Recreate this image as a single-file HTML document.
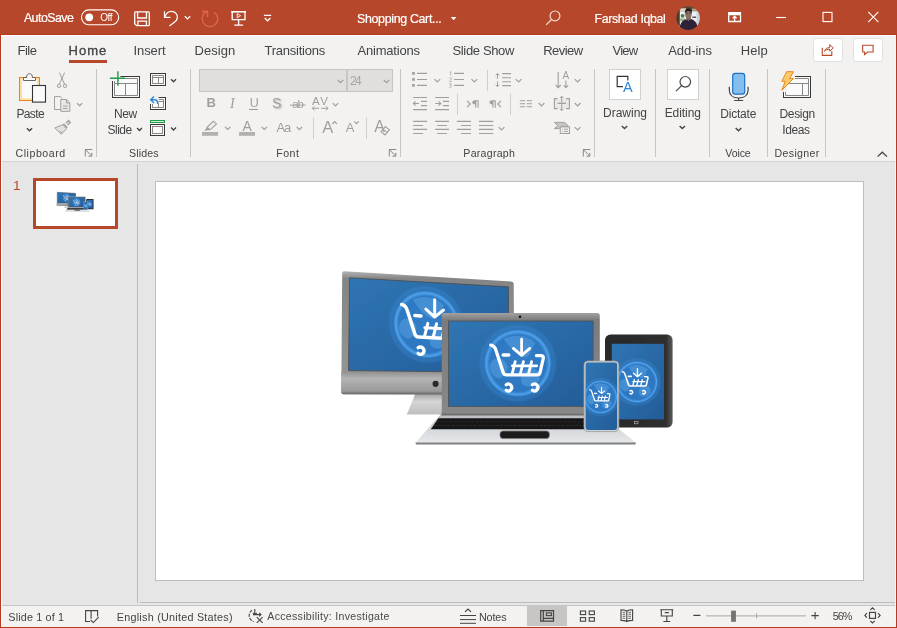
<!DOCTYPE html>
<html lang="en">
<head>
<meta charset="utf-8">
<title>Shopping Cart - PowerPoint</title>
<style>
*{box-sizing:border-box;margin:0;padding:0}
html,body{width:897px;height:628px;overflow:hidden;background:#e6e6e6}
body{position:relative;font-family:"Liberation Sans",sans-serif;color:#444;-webkit-font-smoothing:antialiased}
.abs{position:absolute}
.t{position:absolute;white-space:nowrap;line-height:20px;height:20px}
svg{position:absolute;overflow:visible}
#titlebar{left:0;top:0;width:897px;height:35px;background:#b7472a}
#ribbon{left:0;top:35px;width:897px;height:126px;background:#f3f2f1}
#ribline{left:0;top:161px;width:897px;height:1px;background:#d4d3d2}
#status{left:0;top:606px;width:897px;height:22px;background:#f3f2f1}
#statline{left:0;top:605px;width:897px;height:1px;background:#c6c5c4}
#paneh{left:140px;top:602px;width:757px;height:1px;background:#bcbcbc}
#panev{left:137px;top:164px;width:1px;height:439px;background:#bcbcbc}
#bl{left:0;top:34px;width:1px;height:594px;background:#b43b1d}
#br{left:896px;top:34px;width:1px;height:594px;background:#b43b1d}
#bb{left:0;top:627px;width:897px;height:1px;background:#b43b1d}
#fl{left:1px;top:35px;width:1px;height:592px;background:rgba(252,255,255,.85)}
#fr{left:895px;top:35px;width:1px;height:592px;background:rgba(250,246,244,.9)}
#fb{left:1px;top:626px;width:895px;height:1px;background:rgba(249,238,234,.95)}
#ft{left:1px;top:35px;width:895px;height:1px;background:rgba(252,255,255,.9)}
#tl{left:0;top:34px;width:897px;height:1px;background:#b43b1d}
.sep{position:absolute;width:1px;background:#c8c6c4;top:69px;height:88px}
.ssep{position:absolute;width:1px;background:#d0cecc}
.g{stroke:#a19f9d;fill:none;stroke-width:1}
.d{stroke:#444;fill:none;stroke-width:1}
.w{stroke:#fff;fill:none;stroke-width:1.3}
</style>
</head>
<body>
<div class="abs" id="titlebar"></div>
<div class="abs" id="ribbon"></div>
<div class="abs" id="ribline"></div>
<!-- title bar icons -->
<svg width="897" height="35" style="left:0;top:0" viewBox="0 0 897 35">
 <!-- autosave toggle -->
 <rect x="81.5" y="9.9" width="37.2" height="14.8" rx="7.4" class="w" style="stroke-width:1.1"/>
 <circle cx="89.2" cy="17.3" r="3.9" fill="#fff"/>
 <!-- save -->
 <path class="w" d="M135.6 11.9 H148.4 Q149.3 11.9 149.3 12.8 V24.7 Q149.3 25.6 148.4 25.6 H136.6 L134.7 23.7 V12.8 Q134.7 11.9 135.6 11.9 Z"/>
 <path class="w" d="M137.6 12 V18 H146.5 V12 M137.9 25.5 V21.2 H146.4 V25.5"/>
 <!-- undo -->
 <path class="w" d="M164.5 11.3 V17.3 H170.4" style="stroke-width:1.2"/>
 <path class="w" d="M164.8 17 C166 13.5 168.6 11.4 171.6 11.4 C175 11.4 177.4 14 177.4 17.2 C177.4 19.6 176 21.2 174 22.6 L169.4 26" style="stroke-width:1.2"/>
 <path class="w" d="M184.8 16.2 L187.5 18.9 L190.2 16.2" style="stroke-width:1.3"/>
 <!-- redo (disabled) -->
 <g stroke="#e0664e" fill="none" stroke-width="1.3">
  <path d="M214.2 12.2 A7.8 7.8 0 1 1 207.5 11.3"/>
  <path d="M202 11.5 H207.6 V16.9"/>
 </g>
 <!-- slideshow from beginning -->
 <path class="w" d="M231.2 11.8 H246" style="stroke-width:1.6"/>
 <path class="w" d="M232.2 12 V19.7 H245 V12 M238.6 19.8 V25 M234.2 25.1 H243.1"/>
 <path class="w" d="M237.2 13.6 L240.6 15.7 L237.2 17.8 Z" style="stroke-width:0.9"/>
 <!-- customize qat -->
 <path class="w" d="M263.9 15.4 H271.2 M264.7 18 L267.55 20.8 L270.4 18" style="stroke-width:1.3"/>
 <!-- title dropdown -->
 <path d="M450.8 17 H456.4 L453.6 20.2 Z" fill="#fff"/>
 <!-- search -->
 <g stroke="#f6ddd6" fill="none" stroke-width="1.2">
  <circle cx="555" cy="15.9" r="4.9"/>
  <path d="M551.5 19.5 L546.2 24.8"/>
 </g>
 <!-- avatar -->
 <defs><clipPath id="av"><circle cx="688.1" cy="18.1" r="11.8"/></clipPath>
 <filter id="avb" x="-10%" y="-10%" width="120%" height="120%"><feGaussianBlur stdDeviation=".55"/></filter></defs>
 <g clip-path="url(#av)"><g filter="url(#avb)">
  <rect x="675" y="5" width="27" height="27" fill="#eef1f4"/>
  <rect x="675" y="5" width="27" height="6.2" fill="#5c4a34"/>
  <rect x="678.6" y="8.2" width="7.4" height="2.8" fill="#d9cfbb"/>
  <rect x="692" y="8.6" width="5" height="2.2" fill="#b8ab94"/>
  <rect x="675" y="10" width="4.8" height="16" fill="#4b3c2c"/>
  <rect x="696.6" y="12" width="4" height="12" fill="#c9d3dc"/>
  <circle cx="682.6" cy="15.8" r="1.9" fill="#4e7a3a"/>
  <rect x="680" y="18.4" width="5" height="3" fill="#9fb48e"/>
  <rect x="692.4" y="16.6" width="3.6" height="1.2" fill="#33302f"/>
  <path d="M679.4 31 C679.6 23.5 682 20.4 686.2 19.2 L688.4 20.4 L691 19 C695.4 20.4 697.8 23.4 698.2 31 Z" fill="#2f2138"/>
  <path d="M686.2 16.5 H690.8 V19.6 L688.5 20.6 L686.2 19.6 Z" fill="#7a5e54"/>
  <ellipse cx="688.4" cy="14.2" rx="3.3" ry="4.2" fill="#8b6f65"/>
  <path d="M684.8 13.4 Q684.6 8.5 688.4 8.5 Q692.2 8.5 692 13.4 Q690.6 10.9 688.4 11 Q686.2 10.9 684.8 13.4Z" fill="#1e1a1e"/>
  <path d="M686 13.2 H687.6 M689.2 13.2 H690.8" stroke="#3a2c2c" stroke-width=".8"/>
 </g></g>
 <!-- ribbon display options -->
 <path class="w" d="M728.7 12.6 H740.5 V21.5 H728.7 Z M728.7 14.6 H740.5 M734.6 21.3 V16.3 M732.6 18.3 L734.6 16.3 L736.6 18.3"/>
 <path class="w" d="M728.2 13.2 H741" style="stroke-width:1.6"/>
 <!-- window controls -->
 <path class="w" d="M776.2 17.5 H786" style="stroke-width:1.1"/>
 <rect x="823" y="12.4" width="9" height="9.2" class="w" style="stroke-width:1.1"/>
 <path class="w" d="M868.2 11.8 L878.4 22.2 M878.4 11.8 L868.2 22.2" style="stroke-width:1.1"/>
</svg>
<!-- tab row -->
<div class="abs" style="left:69px;top:60px;width:38px;height:3px;background:#b7472a"></div>
<div class="abs" style="left:813px;top:38px;width:30px;height:24px;background:#fff;border:1px solid #e3e1df;border-radius:3px"></div>
<div class="abs" style="left:853px;top:38px;width:30px;height:24px;background:#fff;border:1px solid #e3e1df;border-radius:3px"></div>
<svg width="80" height="30" style="left:810px;top:36px" viewBox="810 36 80 30">
 <g stroke="#b7472a" fill="none" stroke-width="1.1">
  <path d="M822.3 47.8 V55.4 H831.8 V51.2"/>
  <path d="M824.6 51.2 C825.2 48.6 827 47.7 829.7 47.7 V44.6 L833.3 47.9 L829.7 51.2 V49.3 C827.6 49.2 826 49.6 824.6 51.2 Z" stroke-width="1"/>
  <path d="M862.7 45.2 H873.1 V52 H867.6 L864.6 54.6 V52 H862.7 Z"/>
 </g>
</svg>
<!-- ribbon -->
<div class="sep" style="left:96px"></div>
<div class="sep" style="left:190px"></div>
<div class="sep" style="left:400px"></div>
<div class="sep" style="left:594px"></div>
<div class="sep" style="left:655px"></div>
<div class="sep" style="left:709px"></div>
<div class="sep" style="left:767px"></div>
<div class="sep" style="left:825px"></div>
<div class="ssep" style="left:313px;top:118px;height:21px"></div>
<div class="ssep" style="left:366px;top:118px;height:21px"></div>
<div class="ssep" style="left:487px;top:70px;height:21px"></div>
<div class="ssep" style="left:457px;top:94px;height:21px"></div>
<div class="ssep" style="left:510px;top:94px;height:21px"></div>
<!-- font boxes -->
<div class="abs" style="left:199px;top:69px;width:148px;height:23px;background:#e1dfdd;border:1px solid #c8c6c4"></div>
<div class="abs" style="left:347px;top:69px;width:46px;height:23px;background:#e1dfdd;border:1px solid #c8c6c4"></div>
<!-- big white buttons -->
<div class="abs" style="left:609px;top:69px;width:32px;height:31px;background:#fff;border:1px solid #d2d0ce"></div>
<div class="abs" style="left:667px;top:69px;width:32px;height:31px;background:#fff;border:1px solid #d2d0ce"></div>
<svg width="897" height="100" style="left:0;top:62px" viewBox="0 62 897 100">
<!-- ===== clipboard group ===== -->
<g id="paste">
 <rect x="19.5" y="77.5" width="20" height="23" fill="#fcdf9e" stroke="#e8861b" stroke-width="1"/>
 <rect x="22" y="79.6" width="15" height="18.8" fill="#fafafa"/>
 <path d="M23.5 80.5 V77.5 H26.7 C26.3 75.4 27.6 73.7 29.5 73.7 C31.4 73.7 32.7 75.4 32.3 77.5 H35.5 V80.5 Z" fill="#fafafa" stroke="#666" stroke-width="1"/>
 <rect x="32.5" y="85.5" width="13" height="16.6" fill="#fafafa" stroke="#333" stroke-width="1.1"/>
 <path class="d" d="M26.9 128.3 L29.5 130.8 L32.1 128.3" style="stroke-width:1.4"/>
</g>
<g id="cut" class="g">
 <path d="M59.4 72.6 L64.6 84.2 M64.6 72.6 L59.4 84.2"/>
 <circle cx="59" cy="85.8" r="1.7"/><circle cx="65" cy="85.8" r="1.7"/>
</g>
<g id="copy" class="g">
 <path d="M60.7 109.5 H54.5 V96.6 H60.2 L62 98.4" />
 <path d="M60.8 99.5 H66.6 L69.8 102.7 V111.3 H60.8 Z" fill="#ebe9e7"/>
 <path d="M66.4 99.6 V103 H69.7 M63 106 H67.6 M63 108.4 H67.6"/>
 <path d="M77 103.2 L79.6 105.7 L82.2 103.2" stroke-width="1.2"/>
</g>
<g id="painter" class="g">
 <path d="M66 123.2 L68.4 120.6 L70.2 122.2 L67.6 125" stroke-width="1.4"/>
 <path d="M62.6 124.6 L66.4 128.8 L61.4 134.2 L54.8 128 Z" fill="#e4e2e0"/>
 <path d="M57.4 130.4 L63.6 131.8 L61.4 134.2 Z" fill="#bdbbb9" stroke="none"/>
 <path d="M63.4 123.8 L67.2 127.8" stroke-width="1.6"/>
</g>
<path class="g" d="M85 149.5 H92.3 M85.3 149.5 V156.5 M86 150.3 L91.8 156 M91.8 152.8 V156.2 H88.4" style="stroke:#8a8886"/>
<!-- ===== slides group ===== -->
<g id="newslide">
 <rect x="112.5" y="76.5" width="27" height="21" fill="#fafafa" stroke="#3b3a39" stroke-width="1"/>
 <path d="M114.5 78.5 H137.5 V95.5 H114.5 Z M114.5 83.5 H137.5 M125.5 83.5 V95.5" fill="none" stroke="#8a8886" stroke-width="1"/>
 <rect x="109" y="70" width="11.4" height="11" fill="#f3f2f1"/>
 <path d="M109.9 78.2 H125 M117.9 71.3 V85.8" stroke="#1e9e4a" stroke-width="1.4" fill="none"/>
 <path class="d" d="M137.1 128 L139.5 130.5 L141.9 128" style="stroke-width:1.4"/>
</g>
<g id="layout">
 <rect x="150.5" y="73.5" width="15" height="12" fill="#fafafa" stroke="#3b3a39" stroke-width="1"/>
 <path d="M152.5 75.5 H163.5 V83.5 H152.5 Z M152.5 77.5 H163.5 M158.5 77.5 V83.5" fill="none" stroke="#8a8886" stroke-width="1"/>
 <path class="d" d="M171 79.3 L173.5 81.8 L176 79.3" style="stroke-width:1.4"/>
</g>
<g id="reset">
 <rect x="150.5" y="97.5" width="15" height="12" fill="#fafafa" stroke="#3b3a39" stroke-width="1"/>
 <path d="M152.5 99.5 H163.5 V107.5 H152.5 Z M152.5 101.5 H163.5 M158.5 101.5 V107.5" fill="none" stroke="#8a8886" stroke-width="1"/>
 <rect x="149" y="95" width="9.6" height="9" fill="#f3f2f1"/>
 <path d="M154 96.5 L150.7 99.7 L154 102.9 M150.9 99.7 H154.6 C156.6 99.7 157.7 101.2 157.7 104" fill="none" stroke="#2b88d8" stroke-width="1.4"/>
</g>
<g id="section">
 <rect x="150.5" y="120.5" width="14" height="2" fill="#c7ebd3" stroke="#1e9e4a" stroke-width="1"/>
 <rect x="150.5" y="124.5" width="14" height="11" fill="#fafafa" stroke="#3b3a39" stroke-width="1"/>
 <rect x="152.5" y="126.5" width="10" height="7" fill="none" stroke="#8a8886" stroke-width="1"/>
 <path class="d" d="M171 127.4 L173.5 129.9 L176 127.4" style="stroke-width:1.4"/>
</g>
<!-- ===== font group ===== -->
<g class="g" style="stroke-width:1.2">
 <path d="M337.8 80 L340.5 82.7 L343.2 80"/>
 <path d="M383.8 80 L386.5 82.7 L389.2 80"/>
 <path d="M332.8 103.1 L335.5 105.8 L338.2 103.1"/>
 <path d="M225 126.8 L227.7 129.5 L230.4 126.8"/>
 <path d="M261.6 126.8 L264.3 129.5 L267 126.8"/>
 <path d="M296.7 127 L299.4 129.7 L302.1 127"/>
 <path d="M332.3 124 L334.6 121.7 L336.9 124"/>
 <path d="M354.2 121.4 L356.5 123.7 L358.8 121.4"/>
</g>
<path class="g" d="M249 109.5 H258" style="stroke-width:1.1"/>
<path class="g" d="M290 105.1 H305.6" style="stroke-width:1"/>
<path class="g" d="M312.3 108.3 H319 M314.4 106.2 L312.3 108.3 L314.4 110.4 M321.2 108.3 H328 M325.9 106.2 L328 108.3 L325.9 110.4"/>
<g id="hilite">
 <rect x="202" y="132" width="16.1" height="3.8" fill="#b3b0ad"/>
 <path d="M213.2 121.2 L216.4 123.6 L210.4 130 L207.2 127.6 Z" class="g" transform="rotate(4 212 125)" style="stroke-width:1.1"/>
 <path d="M207.2 127.4 L210.2 130 L204 130.8 Z" fill="#a19f9d"/>
</g>
<rect x="239.1" y="132" width="15.9" height="3.8" fill="#b3b0ad"/>
<g id="clearfmt" class="g">
 <path d="M385.4 126.6 L389.4 129.8 L385 134.9 L381 131.7 Z" fill="#f3f2f1" stroke-width="1.1"/>
 <path d="M383 129.2 L387.2 132.5" stroke-width="1"/>
</g>
<path class="g" d="M389 149.5 H396.3 M389.3 149.5 V156.5 M390 150.3 L395.8 156 M395.8 152.8 V156.2 H392.4" style="stroke:#8a8886"/>
<!-- ===== paragraph group ===== -->
<g class="g" style="stroke-width:1.1">
 <path d="M417 73.4 H427 M417 79.5 H427 M417 85.4 H427"/>
 <path d="M454.1 73.4 H464 M454.1 79.5 H464 M454.1 85.4 H464"/>
 <path d="M502.1 73.6 H511 M502.1 77.7 H511 M502.1 81.7 H511 M502.1 85.6 H511"/>
 <path d="M497.5 73.6 V78.9 M495.6 75.5 L497.5 73.6 L499.4 75.5 M497.5 81.3 V86.6 M495.6 84.7 L497.5 86.6 L499.4 84.7" stroke-width="1"/>
 <!-- indent -->
 <path d="M413.1 97.5 H427 M413.1 109.6 H427 M421 101.4 H427 M421 105.6 H427 M413.4 103.5 H419 M415.5 101.4 L413.4 103.5 L415.5 105.6"/>
 <path d="M435.1 97.5 H449 M435.1 109.6 H449 M443 101.4 H449 M443 105.6 H449 M435.1 103.5 H440.8 M438.7 101.4 L440.8 103.5 L438.7 105.6"/>
 <!-- align -->
 <path d="M413.1 121.4 H427 M413.1 125.5 H423.1 M413.1 129.4 H427 M413.1 133.5 H423.1"/>
 <path d="M435.1 121.4 H449 M437.2 125.5 H447 M435.1 129.4 H449 M437.2 133.5 H447"/>
 <path d="M456.9 121.4 H471 M461.1 125.5 H471 M456.9 129.4 H471 M461.1 133.5 H471"/>
 <path d="M479 121.4 H493.2 M479 125.5 H493.2 M479 129.4 H493.2 M479 133.5 H493.2"/>
 <!-- columns -->
 <path d="M519.8 100.7 H525.1 M519.8 103.8 H525.1 M519.8 106.7 H525.1 M526.7 100.7 H532.1 M526.7 103.8 H532.1 M526.7 106.7 H532.1"/>
</g>
<g fill="#a19f9d">
 <rect x="412.1" y="72" width="2.7" height="2.7"/><rect x="412.1" y="78.1" width="2.7" height="2.7"/><rect x="412.1" y="84" width="2.7" height="2.7"/>
</g>
<g class="g" style="stroke-width:0.7">
 <path d="M449.6 72.6 L450.7 71.6 V75.4"/>
 <path d="M449.3 78.4 C449.6 77.4 451.6 77.4 451.5 78.7 C451.4 79.6 450 80.3 449.3 81.4 H451.8"/>
 <path d="M449.3 83.8 H451.4 L450.3 85.3 C451.8 85.3 451.9 87.4 450.3 87.4 C449.7 87.4 449.4 87.2 449.2 86.9"/>
</g>
<g class="g" style="stroke-width:1.2">
 <path d="M434.4 79.1 L437.3 82 L440.2 79.1"/>
 <path d="M471.5 79.1 L474.4 82 L477.3 79.1"/>
 <path d="M515.7 79.1 L518.6 82 L521.5 79.1"/>
 <path d="M574.7 79.1 L577.6 82 L580.5 79.1"/>
 <path d="M538.6 103 L541.5 105.9 L544.4 103"/>
 <path d="M574.7 103 L577.6 105.9 L580.5 103"/>
 <path d="M498.6 127.1 L501.5 130 L504.4 127.1"/>
 <path d="M574.7 127.1 L577.6 130 L580.5 127.1"/>
 <!-- > and < for paragraph direction -->
 <path d="M467 101 L470.4 104 L467 107" stroke-width="1.1"/>
 <path d="M501 101 L497.6 104 L501 107" stroke-width="1.1"/>
</g>
<!-- pilcrows -->
<g fill="#a19f9d">
 <path d="M478.6 100.3 V107.8 H477.5 V101.3 H476.3 V107.8 H475.2 V104.4 C473.4 104.4 472.3 103.6 472.3 102.3 C472.3 101 473.4 100.3 475.2 100.3 Z"/>
 <path d="M495.8 100.3 V107.8 H494.7 V101.3 H493.5 V107.8 H492.4 V104.4 C490.6 104.4 489.5 103.6 489.5 102.3 C489.5 101 490.6 100.3 492.4 100.3 Z"/>
</g>
<!-- text direction -->
<g class="g" style="stroke-width:1.1">
 <path d="M558.2 72 V87.6 M555.6 85 L558.2 87.6 L560.8 85"/>
 <path d="M565.9 80.6 V87.6 M563.7 85.4 L565.9 87.6 L568.1 85.4"/>
</g>
<!-- align text -->
<g class="g" style="stroke-width:1.1">
 <rect x="555" y="99" width="14" height="9.2" fill="#ebe9e7" stroke="none"/>
 <path d="M557.6 98.6 H554.4 V108.6 H557.6 M566 98.6 H569.4 V108.6 H566 M557.6 103.4 H566"/>
 <path d="M561.7 102.6 V96.2 M559.9 98 L561.7 96.2 L563.5 98 M561.7 104.2 V110.6 M559.9 108.8 L561.7 110.6 L563.5 108.8" stroke-width="1"/>
</g>
<!-- smartart -->
<g class="g" style="stroke-width:1">
 <path d="M554.3 122.4 H564.8 L568.4 126.2 H562 L559 128.6 L554.3 128.6 L558 125.5 Z" fill="#c8c6c4"/>
 <rect x="560.3" y="126.9" width="9.2" height="6.6" fill="#f3f2f1"/>
 <path d="M562 129.2 H562.9 M564 129.2 H568 M562 131.4 H562.9 M564 131.4 H568"/>
</g>
<path class="g" d="M583 149.5 H590.3 M583.3 149.5 V156.5 M584 150.3 L589.8 156 M589.8 152.8 V156.2 H586.4" style="stroke:#8a8886"/>
<!-- ===== drawing ===== -->
<path d="M623 86.6 H617.2 V76.4 H627.8 V80.6" class="d" style="stroke:#333;stroke-width:1.2"/>
<path class="d" d="M621.8 126 L624.5 128.6 L627.2 126" style="stroke-width:1.4"/>
<!-- ===== editing ===== -->
<g class="d" style="stroke-width:1.2">
 <circle cx="685.3" cy="81.8" r="5.3"/>
 <path d="M681.4 85.8 L676 91.2"/>
</g>
<path class="d" d="M679.6 126 L682.3 128.6 L685 126" style="stroke-width:1.4"/>
<!-- ===== dictate ===== -->
<rect x="732.7" y="73.3" width="12" height="20.9" rx="2.6" fill="#83beec" stroke="#1a73c7" stroke-width="1.2"/>
<path class="d" d="M729.3 86.8 V90 C729.3 95 733 98 738.7 98 C744.4 98 748.1 95 748.1 90 V86.8 M738.7 98 V100.4 M734.2 100.5 H743.2" style="stroke-width:1.2"/>
<path class="d" d="M735.7 128 L738.5 130.7 L741.3 128" style="stroke-width:1.4"/>
<!-- ===== design ideas ===== -->
<rect x="783.5" y="76.5" width="27" height="21" fill="#fafafa" stroke="#3b3a39" stroke-width="1"/>
<path d="M785.5 78.5 H808.5 V95.5 H785.5 Z M785.5 83.5 H808.5 M802.5 83.5 V95.5" fill="none" stroke="#8a8886" stroke-width="1"/>
<path d="M780 70 H795 V80 H787 V92 H780 Z" fill="#f3f2f1"/>
<path d="M786.6 71.7 H793.4 L789.6 78.6 H793.4 L781.8 90.2 L785.3 81.3 H781.8 Z" fill="#fbcb6b" stroke="#e8861b" stroke-width="1" stroke-linejoin="round"/>
<!-- collapse -->
<path class="d" d="M877.6 156.6 L882.3 152.2 L887 156.6" style="stroke-width:1.3"/>
</svg>
<!-- workspace -->
<div class="abs" id="panev"></div>
<div class="abs" id="paneh"></div>
<div class="abs" id="thumb" style="left:33px;top:178px;width:85px;height:51px;background:#fff;border:3px solid #b7472a"></div>
<div class="abs" id="slide" style="left:155px;top:181px;width:709px;height:400px;background:#fff;border:1px solid #bdbdbd"></div>
<svg width="897" height="628" style="left:0;top:0" viewBox="0 0 897 628">
<defs>
 <linearGradient id="scr" x1="0" y1="0" x2="1" y2="1">
  <stop offset="0" stop-color="#2f75b3"/><stop offset="1" stop-color="#235d98"/>
 </linearGradient>
 <radialGradient id="glow">
  <stop offset="0" stop-color="#3684d2" stop-opacity=".75"/>
  <stop offset=".7" stop-color="#2e7bc8" stop-opacity=".8"/>
  <stop offset=".79" stop-color="#52a6f2" stop-opacity=".95"/>
  <stop offset=".85" stop-color="#2f7cc6" stop-opacity=".5"/>
  <stop offset=".93" stop-color="#3d8fde" stop-opacity=".3"/>
  <stop offset="1" stop-color="#2d74b6" stop-opacity="0"/>
 </radialGradient>
 <linearGradient id="bez" x1="0" y1="0" x2="0" y2="1">
  <stop offset="0" stop-color="#b4b4b4"/><stop offset=".06" stop-color="#858585"/><stop offset="1" stop-color="#979797"/>
 </linearGradient>
 <linearGradient id="chin" x1="0" y1="0" x2="0" y2="1">
  <stop offset="0" stop-color="#8f8f8f"/><stop offset=".3" stop-color="#b4b4b4"/><stop offset=".85" stop-color="#9a9a9a"/><stop offset="1" stop-color="#5e5e5e"/>
 </linearGradient>
 <linearGradient id="stand" x1="0" y1="0" x2="0" y2="1">
  <stop offset="0" stop-color="#9c9c9c"/><stop offset=".4" stop-color="#d6d6d6"/><stop offset="1" stop-color="#bdbdbd"/>
 </linearGradient>
 <linearGradient id="lid" x1="0" y1="0" x2="0" y2="1">
  <stop offset="0" stop-color="#a2a2a2"/><stop offset=".07" stop-color="#7b7b7b"/><stop offset="1" stop-color="#888888"/>
 </linearGradient>
 <linearGradient id="base" x1="0" y1="0" x2="0" y2="1">
  <stop offset="0" stop-color="#b9bcc0"/><stop offset=".5" stop-color="#d4d7db"/><stop offset="1" stop-color="#e6e8ea"/>
 </linearGradient>
 <linearGradient id="tab" x1="0" y1="0" x2="1" y2="0">
  <stop offset="0" stop-color="#2a2a2a"/><stop offset=".9" stop-color="#2e2e2e"/><stop offset="1" stop-color="#5a5a5a"/>
 </linearGradient>
 <g id="cart" fill="none" stroke="#fff" stroke-width="3.3" stroke-linecap="round" stroke-linejoin="round">
  <path d="M-27 -18 C-23.6 -17.6 -22.6 -15.6 -21.7 -12.4 L-14.6 9.2 Q-13.8 11.6 -11.2 11.6 H19 Q22 11.6 22.4 8.8 L25.4 -4.6 Q26 -7.6 23 -7.6 H18.6"/>
  <path d="M-14.7 -8.2 H-9"/>
  <path d="M-5.4 2.6 H19" stroke-width="2.8"/>
  <path d="M-2.6 -1.6 L-5.6 10.4 M5.6 -1.6 L2.6 10.4 M13.8 -1.6 L10.8 10.4" stroke-width="2.8"/>
  <path d="M3.8 -24 V-8.2 M-4.4 -14.8 L3.8 -7.8 L12 -14.8" stroke-width="2.8"/>
  <path d="M-11.6 21.6 A3.4 3.4 0 1 1 -11.6 27 M14.6 21.6 A3.4 3.4 0 1 1 14.6 27" stroke-width="3.2"/>
 </g>
 <g id="globe">
  <circle r="40" fill="url(#glow)"/>
  <path d="M-14 -24 C-4 -30 10 -28 18 -20 C12 -14 14 -6 6 -6 C-2 -8 -8 -16 -14 -24 Z M-26 -2 C-20 -8 -12 -4 -10 4 C-12 12 -18 18 -22 14 C-28 10 -30 4 -26 -2 Z M8 6 C16 2 24 8 22 16 C18 24 8 26 4 20 C2 14 4 10 8 6 Z" fill="#7cc0fa" opacity=".3"/>
 </g>
 <clipPath id="cm"><path d="M349.6 277.8 L508.4 286.8 L508.6 372.4 L348.5 370.6 Z"/></clipPath>
 <clipPath id="cl"><rect x="448.5" y="321" width="144.6" height="85.4"/></clipPath>
 <clipPath id="ct"><rect x="611.8" y="343.8" width="52.2" height="75.6"/></clipPath>
 <clipPath id="cp"><rect x="585.6" y="362.6" width="31.6" height="67.4" rx="2.4"/></clipPath>
 <filter id="soft" x="-2%" y="-2%" width="104%" height="104%"><feGaussianBlur stdDeviation=".45"/></filter>
 <g id="dev">
  <!-- monitor -->
  <path d="M406.8 414.4 L415.6 393 H444 V414.4 Z" fill="url(#stand)"/>
  <path d="M344.3 271.2 L511.4 281.5 Q513.6 281.7 513.7 283.8 L514.4 394.6 L343.4 394.2 Q341.3 394.2 341.3 392 L342.2 273.2 Q342.3 271.1 344.3 271.2 Z" fill="url(#bez)"/>
  <path d="M341.4 371.6 L514.3 373.6 L514.4 394.6 L343.4 394.2 Q341.3 394.2 341.3 392 Z" fill="url(#chin)"/>
  <path d="M349.6 277.8 L508.4 286.8 L508.6 372.4 L348.5 370.6 Z" fill="url(#scr)" stroke="#4a4a4a" stroke-width=".8"/>
  <g clip-path="url(#cm)">
   <use href="#globe" transform="translate(426.5 324.5) skewY(3) scale(.98 1)"/>
   <use href="#cart" transform="translate(430.6 325.2) skewY(3) scale(1.07)"/>
  </g>
  <circle cx="435.6" cy="383.8" r="3.1" fill="#2b2b2b"/>
  <!-- tablet -->
  <rect x="605" y="334.6" width="67.6" height="93" rx="5.5" fill="url(#tab)"/>
  <rect x="611.8" y="343.8" width="52.2" height="75.6" fill="url(#scr)"/>
  <g clip-path="url(#ct)">
   <use href="#globe" transform="translate(637 382) scale(.62)"/>
   <use href="#cart" transform="translate(635.6 380.4) scale(.485)"/>
  </g>
  <rect x="634.6" y="421.6" width="3.4" height="2.2" fill="none" stroke="#bdbdbd" stroke-width=".6"/>
  <!-- laptop -->
  <path d="M444.4 313 H597.2 Q599.8 313 599.8 315.6 V414.6 H441.8 V315.6 Q441.8 313 444.4 313 Z" fill="url(#lid)"/>
  <rect x="448.5" y="321" width="144.6" height="85.4" fill="url(#scr)" stroke="#505050" stroke-width=".8"/>
  <g clip-path="url(#cl)">
   <use href="#globe" transform="translate(517.8 363.2)"/>
   <use href="#cart" transform="translate(517.8 363.2)"/>
  </g>
  <circle cx="520" cy="316.8" r="1.3" fill="#151515"/>
  <path d="M440.8 414.2 H600.4 L636 442.8 H415.4 Z" fill="url(#base)"/>
  <path d="M441.4 413.4 H599.8 V415.4 H441.4 Z" fill="#6f6f6f"/>
  <path d="M415.4 442.6 H636 L635.4 444.4 H416 Z" fill="#7e8084"/>
  <path d="M438.4 418.2 H596.8 L610 429.2 H430.8 Z" fill="#161616"/>
  <path d="M436 421.8 H601 M433.6 425.4 H605.4" stroke="#3a3a3a" stroke-width=".6" stroke-dasharray="3.4 1" fill="none"/>
  <rect x="500" y="431" width="49.4" height="7.6" rx="3" fill="#1c1c1c" stroke="#77797c" stroke-width=".8"/>
  <!-- phone -->
  <rect x="584" y="361" width="34.8" height="70.6" rx="4" fill="#cfd1d4" stroke="#9a9a9a" stroke-width=".8"/>
  <rect x="585.6" y="362.6" width="31.6" height="67.4" rx="2.4" fill="url(#scr)"/>
  <g clip-path="url(#cp)">
   <use href="#globe" transform="translate(600.6 397) scale(.5)"/>
   <use href="#cart" transform="translate(600.1 396.5) scale(.385)"/>
  </g>
 </g>
</defs>
<use href="#dev" filter="url(#soft)"/>
<g transform="translate(36 181.8) scale(0.1114) translate(-155 -181)"><use href="#dev"/></g>
</svg>
<!-- status bar -->
<div class="abs" id="statline"></div>
<div class="abs" id="status"></div>
<div class="abs" style="left:527px;top:606px;width:40px;height:21px;background:#c8c6c4"></div>
<svg width="897" height="24" style="left:0;top:604px" viewBox="0 604 897 24">
<g class="d" style="stroke-width:1.1">
 <!-- spell check -->
 <path d="M90 621.5 H85.6 V610.6 H97.6 V616.6 M91.1 610.6 V618.8 M90.6 620 L93.3 622.6 L98.6 617.2"/>
 <!-- accessibility -->
 <path d="M252 610.2 A6.4 6.4 0 0 0 253.6 621.6" stroke-dasharray="3.2 1.2"/>
 <path d="M254.8 609 V614.6 M252.8 612.8 L254.8 614.8 L256.8 612.8 M253 614.6 H261 M259.2 612.8 L261 614.6 L259.2 616.4"/>
 <path d="M256.8 617.2 L262.6 622.8 M262.6 617.2 L256.8 622.8"/>
 <!-- notes -->
 <path d="M460 615.5 H476 M460 619.6 H476 M460 623.3 H476" stroke-width="1"/>
 <path d="M465 611.9 L468 609.1 L471 611.9" stroke-width="1.2"/>
 <!-- normal view -->
 <path d="M540.7 610.7 H553.5 V621.1 H540.7 Z M543.3 610.7 V621.1 M543.3 618.3 H553.5" stroke-width="1.2"/>
 <rect x="546.4" y="612.9" width="5" height="2.7"/>
 <!-- sorter -->
 <rect x="580.4" y="611" width="5.2" height="3.6"/><rect x="589.2" y="611" width="5.2" height="3.6"/>
 <rect x="580.4" y="617.6" width="5.2" height="3.6"/><rect x="589.2" y="617.6" width="5.2" height="3.6"/>
 <!-- reading view -->
 <path d="M626.8 611 C625 610 623 609.8 621 609.8 V620.4 C623 620.4 625 620.6 626.8 621.6 C628.6 620.6 630.6 620.4 632.6 620.4 V609.8 C630.6 609.8 628.6 610 626.8 611 Z M626.8 611 V621.6"/>
 <path d="M622.6 612.3 H625.2 M622.6 614.3 H625.2 M622.6 616.3 H625.2 M622.6 618.3 H625.2 M628.4 612.3 H631 M628.4 614.3 H631 M628.4 616.3 H631 M628.4 618.3 H631" stroke-width="0.8"/>
 <!-- slideshow -->
 <path d="M660.2 609.8 H673.4 M661.3 610 V616 H672.3 V610 M664.8 612.6 H668.8 M666.8 616 V621.4 M663.4 621.5 H670.2"/>
 <!-- zoom -->
 <path d="M693.3 615.4 H700.4 M811.4 615.6 H818.8 M815.1 611.9 V619.3" stroke-width="1.1"/>
 <!-- fit -->
 <rect x="869.5" y="612.4" width="6" height="6" stroke-width="1.2"/>
 <path d="M870.3 609.9 L872.5 607.9 L874.7 609.9 M870.3 620.9 L872.5 622.9 L874.7 620.9 M866.9 613.2 L864.9 615.4 L866.9 617.6 M878.1 613.2 L880.1 615.4 L878.1 617.6" stroke-width="1.2"/>
</g>
<path d="M706 615.9 H806" stroke="#a6a6a6" stroke-width="1" fill="none"/>
<path d="M756.6 613.4 V618.3" stroke="#a6a6a6" stroke-width="1" fill="none"/>
<rect x="731.1" y="610.6" width="4.8" height="11.2" fill="#737373"/>
</svg>
<!-- texts -->
<div id="texts" style="position:absolute;left:0;top:0;width:897px;height:628px;will-change:transform">
<span class="t" style="left:23.90px;top:7.90px;font-size:12.4px;font-weight:400;color:#fff;letter-spacing:-0.534px;-webkit-text-stroke:0.2px #fff;">AutoSave</span>
<span class="t" style="left:100.20px;top:8.20px;font-size:10px;font-weight:400;color:#fff;letter-spacing:-0.388px;">Off</span>
<span class="t" style="left:357.00px;top:8.90px;font-size:12.4px;font-weight:400;color:#fff;letter-spacing:-0.323px;-webkit-text-stroke:0.2px #fff;">Shopping Cart...</span>
<span class="t" style="left:594.50px;top:8.90px;font-size:12.4px;font-weight:400;color:#fff;letter-spacing:-0.376px;-webkit-text-stroke:0.2px #fff;">Farshad Iqbal</span>
<span class="t" style="left:17.50px;top:40.90px;font-size:13px;font-weight:400;color:#444;letter-spacing:-0.489px;">File</span>
<span class="t" style="left:68.50px;top:40.90px;font-size:13px;font-weight:400;color:#444;letter-spacing:1.018px;-webkit-text-stroke:0.35px #444;">Home</span>
<span class="t" style="left:133.50px;top:40.90px;font-size:13px;font-weight:400;color:#444;letter-spacing:-0.080px;">Insert</span>
<span class="t" style="left:194.50px;top:40.90px;font-size:13px;font-weight:400;color:#444;letter-spacing:0.053px;">Design</span>
<span class="t" style="left:264.50px;top:40.90px;font-size:13px;font-weight:400;color:#444;letter-spacing:-0.235px;">Transitions</span>
<span class="t" style="left:357.50px;top:40.90px;font-size:13px;font-weight:400;color:#444;letter-spacing:-0.201px;">Animations</span>
<span class="t" style="left:452.50px;top:40.90px;font-size:13px;font-weight:400;color:#444;letter-spacing:-0.350px;">Slide Show</span>
<span class="t" style="left:543.25px;top:40.90px;font-size:13px;font-weight:400;color:#444;letter-spacing:-0.547px;">Review</span>
<span class="t" style="left:612.50px;top:40.90px;font-size:13px;font-weight:400;color:#444;letter-spacing:-0.768px;">View</span>
<span class="t" style="left:668.25px;top:40.90px;font-size:13px;font-weight:400;color:#444;letter-spacing:-0.055px;">Add-ins</span>
<span class="t" style="left:740.75px;top:40.90px;font-size:13px;font-weight:400;color:#444;letter-spacing:0.081px;">Help</span>
<span class="t" style="left:16.40px;top:104.30px;font-size:12px;font-weight:400;color:#444;letter-spacing:-0.603px;">Paste</span>
<span class="t" style="left:114.00px;top:104.30px;font-size:12px;font-weight:400;color:#444;letter-spacing:-0.420px;">New</span>
<span class="t" style="left:107.50px;top:120.30px;font-size:12px;font-weight:400;color:#444;letter-spacing:-0.502px;">Slide</span>
<span class="t" style="left:603.00px;top:102.70px;font-size:12px;font-weight:400;color:#444;letter-spacing:-0.007px;">Drawing</span>
<span class="t" style="left:664.70px;top:102.70px;font-size:12px;font-weight:400;color:#444;letter-spacing:-0.070px;">Editing</span>
<span class="t" style="left:720.30px;top:104.30px;font-size:12px;font-weight:400;color:#444;letter-spacing:-0.212px;">Dictate</span>
<span class="t" style="left:779.50px;top:104.30px;font-size:12px;font-weight:400;color:#444;letter-spacing:-0.336px;">Design</span>
<span class="t" style="left:782.30px;top:120.30px;font-size:12px;font-weight:400;color:#444;letter-spacing:-0.414px;">Ideas</span>
<span class="t" style="left:15.50px;top:142.70px;font-size:10.6px;font-weight:400;color:#444;letter-spacing:0.543px;">Clipboard</span>
<span class="t" style="left:129.00px;top:142.70px;font-size:10.6px;font-weight:400;color:#444;letter-spacing:0.149px;">Slides</span>
<span class="t" style="left:276.30px;top:142.70px;font-size:10.6px;font-weight:400;color:#444;letter-spacing:0.482px;">Font</span>
<span class="t" style="left:463.30px;top:142.70px;font-size:10.6px;font-weight:400;color:#444;letter-spacing:0.265px;">Paragraph</span>
<span class="t" style="left:725.30px;top:142.70px;font-size:10.6px;font-weight:400;color:#444;letter-spacing:-0.131px;">Voice</span>
<span class="t" style="left:774.50px;top:142.70px;font-size:10.6px;font-weight:400;color:#444;letter-spacing:0.347px;">Designer</span>
<span class="t" style="left:350.00px;top:70.50px;font-size:12px;font-weight:400;color:#a6a4a2;letter-spacing:-1.674px;">24</span>
<span class="t" style="left:8.30px;top:606.80px;font-size:10.8px;font-weight:400;color:#444;letter-spacing:0.162px;">Slide 1 of 1</span>
<span class="t" style="left:116.75px;top:606.80px;font-size:10.8px;font-weight:400;color:#444;letter-spacing:0.247px;">English (United States)</span>
<span class="t" style="left:267.30px;top:606.40px;font-size:10.6px;font-weight:400;color:#4a4a4a;letter-spacing:0.291px;">Accessibility: Investigate</span>
<span class="t" style="left:478.90px;top:606.80px;font-size:10.8px;font-weight:400;color:#444;letter-spacing:-0.127px;">Notes</span>
<span class="t" style="left:832.70px;top:606.30px;font-size:10.8px;font-weight:400;color:#444;letter-spacing:-0.955px;">56%</span>
<span class="t" style="left:13.00px;top:176.10px;font-size:13.5px;font-weight:400;color:#b7472a;letter-spacing:0.000px;">1</span>
<span class="t" style="left:206.50px;top:93.10px;font-size:13px;font-weight:700;color:#a19f9d;letter-spacing:0.000px;">B</span>
<span class="t" style="left:230.10px;top:93.70px;font-size:14px;font-weight:400;color:#a19f9d;letter-spacing:0.000px;font-family:'Liberation Serif';font-style:italic;">I</span>
<span class="t" style="left:249.70px;top:93.00px;font-size:12.5px;font-weight:400;color:#a19f9d;letter-spacing:0.000px;">U</span>
<span class="t" style="left:272.00px;top:93.20px;font-size:14px;font-weight:400;color:#a19f9d;letter-spacing:0.000px;text-shadow:1.2px 1.2px 1.5px rgba(0,0,0,.28);">S</span>
<span class="t" style="left:292.30px;top:94.30px;font-size:11.5px;font-weight:400;color:#a19f9d;letter-spacing:-1.096px;">ab</span>
<span class="t" style="left:312.10px;top:90.60px;font-size:11.5px;font-weight:400;color:#a19f9d;letter-spacing:1.283px;">AV</span>
<span class="t" style="left:276.50px;top:118.10px;font-size:13px;font-weight:400;color:#a19f9d;letter-spacing:-1.071px;">Aa</span>
<span class="t" style="left:242.40px;top:115.60px;font-size:14px;font-weight:400;color:#a19f9d;letter-spacing:0.000px;">A</span>
<span class="t" style="left:322.20px;top:116.60px;font-size:16.5px;font-weight:400;color:#a19f9d;letter-spacing:0.000px;">A</span>
<span class="t" style="left:345.80px;top:118.10px;font-size:13px;font-weight:400;color:#a19f9d;letter-spacing:0.000px;">A</span>
<span class="t" style="left:374.30px;top:117.40px;font-size:16px;font-weight:400;color:#a19f9d;letter-spacing:0.000px;">A</span>
<span class="t" style="left:623.10px;top:76.60px;font-size:14.5px;font-weight:400;color:#2b88d8;letter-spacing:0.000px;">A</span>
<span class="t" style="left:562.50px;top:66.10px;font-size:10px;font-weight:400;color:#a19f9d;letter-spacing:0.000px;">A</span>
</div>
<div class="abs" id="tl"></div>
<div class="abs" id="ft"></div>
<div class="abs" id="fl"></div>
<div class="abs" id="fr"></div>
<div class="abs" id="fb"></div>
<div class="abs" id="bl"></div>
<div class="abs" id="br"></div>
<div class="abs" id="bb"></div>
</body>
</html>
